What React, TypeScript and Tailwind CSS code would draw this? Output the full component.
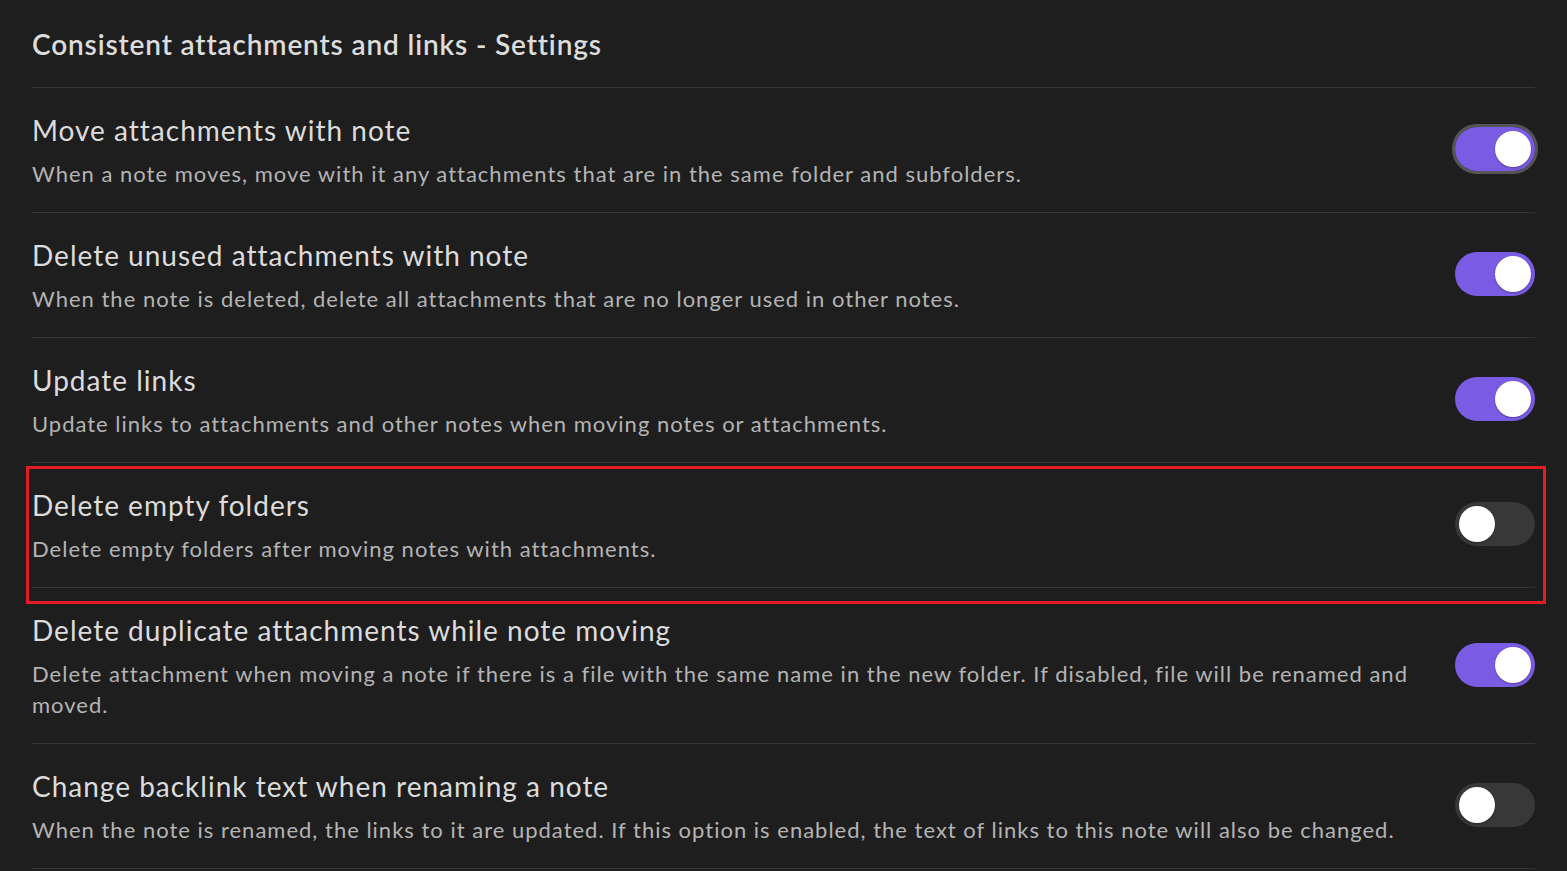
import React from "react";

type Setting = {
  name: string;
  desc: string;
  on: boolean;
  focused?: boolean;
  marked?: boolean;
};

const settings: Setting[] = [
  {
    name: "Move attachments with note",
    desc: "When a note moves, move with it any attachments that are in the same folder and subfolders.",
    on: true,
    focused: true,
  },
  {
    name: "Delete unused attachments with note",
    desc: "When the note is deleted, delete all attachments that are no longer used in other notes.",
    on: true,
  },
  {
    name: "Update links",
    desc: "Update links to attachments and other notes when moving notes or attachments.",
    on: true,
  },
  {
    name: "Delete empty folders",
    desc: "Delete empty folders after moving notes with attachments.",
    on: false,
    marked: true,
  },
  {
    name: "Delete duplicate attachments while note moving",
    desc: "Delete attachment when moving a note if there is a file with the same name in the new folder. If disabled, file will be renamed and moved.",
    on: true,
  },
  {
    name: "Change backlink text when renaming a note",
    desc: "When the note is renamed, the links to it are updated. If this option is enabled, the text of links to this note will also be changed.",
    on: false,
  },
];

function Toggle({ on, focused }: { on: boolean; focused?: boolean }) {
  return (
    <div
      className={
        focused
          ? "rounded-full border-[3px] border-[#555555]"
          : "rounded-full border-[3px] border-transparent"
      }
    >
      <div
        className={
          on
            ? "flex h-[44px] w-[80px] items-center justify-end rounded-full bg-[#7a5be3] px-[4px]"
            : "flex h-[44px] w-[80px] items-center justify-start rounded-full bg-[#383838] px-[4px]"
        }
      >
        <div className="h-[36px] w-[36px] rounded-full bg-white shadow-[0_1px_2px_rgba(0,0,0,0.3)]" />
      </div>
    </div>
  );
}

function SettingRow({ s }: { s: Setting }) {
  return (
    <div className="relative">
      <div className="flex items-center border-t border-[#363636] pt-[24px] pb-[23px]">
        <div className="flex-1 pr-[40px]">
          <div className="text-[28px] leading-[36px] tracking-[1px] text-[#dcdcdc]">{s.name}</div>
          <div className="mt-[10px] text-[22px] leading-[31px] tracking-[1px] text-[#b4b4b4]">
            {s.desc}
          </div>
        </div>
        <div className="-mr-[3px] -mt-[3px]">
          <Toggle on={s.on} focused={s.focused} />
        </div>
      </div>
      {s.marked && (
        <div className="pointer-events-none absolute -left-[6px] -right-[11px] top-[4px] -bottom-[17px] border-[3px] border-[#e51c23]" />
      )}
    </div>
  );
}

export default function App() {
  return (
    <div
      className="min-h-[871px] bg-[#1e1e1e] pl-[32px] pr-[32px]"
      style={{ fontFamily: '"Segoe UI", Lato, "Noto Sans", sans-serif' }}
    >
      <h1 className="pt-[25px] pb-[24px] text-[28px] font-semibold leading-[38px] tracking-[0.86px] text-[#dcdcdc]">
        Consistent attachments and links - Settings
      </h1>
      {settings.map((s) => (
        <SettingRow key={s.name} s={s} />
      ))}
      <div className="border-t border-[#363636]" />
    </div>
  );
}
